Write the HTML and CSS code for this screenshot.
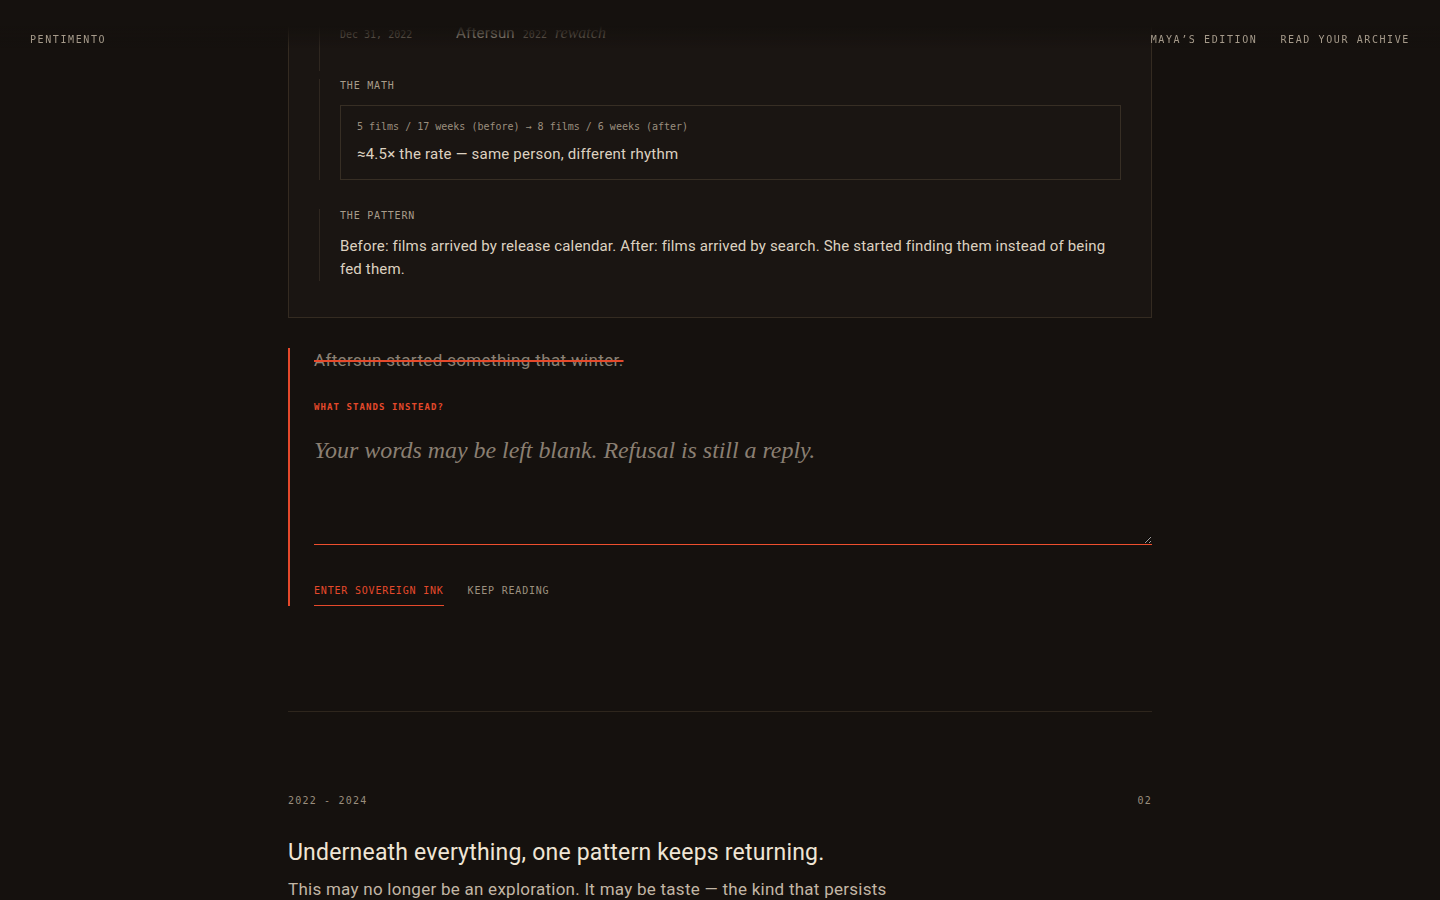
FILE: index.html
```html
<!DOCTYPE html>
<html lang="en">
<head>
<meta charset="utf-8">
<title>Pentimento</title>
<link rel="stylesheet" href="styles.css">
</head>
<body>
<header class="site-header">
  <div class="brand">PENTIMENTO</div>
  <nav class="nav">
    <a class="nav-link" href="#">MAYA’S EDITION</a>
    <a class="nav-link" href="#">READ YOUR ARCHIVE</a>
  </nav>
</header>

<main class="page">
  <section class="card">
    <div class="item item-entry">
      <div class="entry-row">
        <span class="entry-date">Dec 31, 2022</span>
        <span class="entry-film">
          <span class="film-title">Aftersun</span>
          <span class="film-year">2022</span>
          <span class="film-tag">rewatch</span>
        </span>
      </div>
    </div>

    <div class="item item-math">
      <div class="item-label">THE MATH</div>
      <div class="math-box">
        <div class="math-formula">5 films / 17 weeks (before) → 8 films / 6 weeks (after)</div>
        <div class="math-result">≈4.5× the rate — same person, different rhythm</div>
      </div>
    </div>

    <div class="item item-pattern">
      <div class="item-label">THE PATTERN</div>
      <p class="pattern-text">Before: films arrived by release calendar. After: films arrived by search. She started finding them instead of being fed them.</p>
    </div>
  </section>

  <section class="revision">
    <p class="struck">Aftersun started something that winter.</p>
    <div class="prompt-label">WHAT STANDS INSTEAD?</div>
    <div class="reply-wrap">
      <textarea class="reply" placeholder="Your words may be left blank. Refusal is still a reply."></textarea>
    </div>
    <div class="actions">
      <button class="btn btn-primary" type="button">ENTER SOVEREIGN INK</button>
      <button class="btn btn-secondary" type="button">KEEP READING</button>
    </div>
  </section>

  <hr class="divider">

  <section class="chapter">
    <div class="chapter-meta">
      <span>2022 - 2024</span>
      <span>02</span>
    </div>
    <h2 class="chapter-title">Underneath everything, one pattern keeps returning.</h2>
    <p class="chapter-text">This may no longer be an exploration. It may be taste — the kind that persists</p>
  </section>
</main>
</body>
</html>
```

FILE: styles.css
```css
* { box-sizing: border-box; }

html, body {
  margin: 0;
  padding: 0;
  background: #15110e;
  color: #d8ccbb;
  font-family: Roboto, "Liberation Sans", sans-serif;
}

body { height: 900px; overflow: hidden; }

.site-header {
  position: fixed;
  top: 0;
  left: 0;
  right: 0;
  height: 48px;
  display: flex;
  justify-content: space-between;
  align-items: flex-start;
  padding: 33px 30px 0 30px;
  background: linear-gradient(to bottom, #15110e 0px, #15110e 26px, rgba(21,17,14,0.55) 36px, rgba(21,17,14,0) 48px);
  z-index: 10;
  font-family: "DejaVu Sans Mono", "Liberation Mono", monospace;
  font-size: 10px;
  line-height: 14px;
  letter-spacing: 0.16em;
  color: #a59a8a;
}

.nav { display: flex; gap: 23px; }
.nav-link { color: #a59a8a; text-decoration: none; }

.page {
  width: 864px;
  margin: 0 auto;
  padding-top: 8px;
}

.card {
  border: 1px solid #342b21;
  background: #1a1512;
  padding: 11px 30px 36px 30px;
}

.item {
  border-left: 1px solid #2f2720;
  padding-left: 20px;
}

.item-entry { padding-bottom: 23px; }
.item-math { margin-top: 8px; }
.item-pattern { margin-top: 29px; }

.entry-row {
  display: grid;
  grid-template-columns: 116px 1fr;
  align-items: baseline;
  line-height: 26px;
}

.entry-date {
  font-family: "DejaVu Sans Mono", "Liberation Mono", monospace;
  font-size: 10px;
  color: #8a7f70;
}

.entry-film { display: flex; align-items: baseline; gap: 8px; }
.film-title { font-size: 15px; letter-spacing: 0.2px; color: #cfc3b2; }
.film-year {
  font-family: "DejaVu Sans Mono", "Liberation Mono", monospace;
  font-size: 10px;
  color: #8a7f70;
}
.film-tag {
  font-family: "Liberation Serif", "DejaVu Serif", serif;
  font-style: italic;
  font-size: 16px;
  color: #8a7f70;
}

.item-label {
  font-family: "DejaVu Sans Mono", "Liberation Mono", monospace;
  font-size: 10px;
  line-height: 14px;
  letter-spacing: 0.08em;
  color: #a89c8a;
}

.math-box {
  margin-top: 12px;
  border: 1px solid #372e24;
  padding: 14px 16px 14px 16px;
}

.math-formula {
  font-family: "DejaVu Sans Mono", "Liberation Mono", monospace;
  font-size: 10px;
  line-height: 14px;
  color: #9a8e7e;
}

.math-result {
  margin-top: 9px;
  font-size: 15px;
  line-height: 22px;
  letter-spacing: 0.22px;
  color: #ddd1c0;
}

.pattern-text {
  margin: 12px 0 0 0;
  font-size: 15px;
  line-height: 23px;
  letter-spacing: 0.16px;
  color: #ddd1c0;
}

.revision {
  margin-top: 30px;
  border-left: 2px solid #e5492b;
  padding-left: 24px;
}

.struck {
  margin: 0;
  font-size: 17px;
  line-height: 24px;
  letter-spacing: 0.35px;
  color: #8b8175;
  text-decoration: line-through;
  text-decoration-color: #e5492b;
  text-decoration-thickness: 2px;
}

.prompt-label {
  margin-top: 28px;
  font-family: "DejaVu Sans Mono", "Liberation Mono", monospace;
  font-size: 9px;
  font-weight: bold;
  line-height: 14px;
  letter-spacing: 0.12em;
  color: #e5492b;
}

.reply-wrap {
  margin-top: 12px;
  border-bottom: 1px solid #ee4f2e;
}

.reply {
  -webkit-appearance: none;
  appearance: none;
  display: block;
  width: 100%;
  height: 118px;
  margin: 0;
  padding: 9px 0 8px 0;
  background: transparent;
  border: 0;
  border-radius: 0;
  outline: none;
  color: #d8ccbb;
  font-family: "Liberation Serif", "DejaVu Serif", serif;
  font-style: italic;
  font-size: 24px;
  line-height: 31px;
  letter-spacing: -0.05px;
  resize: vertical;
}

.reply::placeholder { color: #8a7f72; opacity: 1; }

.actions {
  margin-top: 39px;
  display: flex;
  gap: 24px;
  align-items: flex-start;
}

.btn {
  background: none;
  border: none;
  padding: 0 0 7px 0;
  margin: 0;
  font-family: "DejaVu Sans Mono", "Liberation Mono", monospace;
  font-size: 10px;
  line-height: 14px;
  letter-spacing: 0.08em;
  cursor: pointer;
}

.btn-primary {
  color: #e5492b;
  border-bottom: 1px solid #e5492b;
}

.btn-secondary {
  color: #9c907f;
  border-bottom: 1px solid transparent;
}

.divider {
  margin: 105px 0 0 0;
  border: none;
  border-top: 1px solid #2e261d;
  height: 0;
}

.chapter { padding-top: 82px; }

.chapter-meta {
  display: flex;
  justify-content: space-between;
  font-family: "DejaVu Sans Mono", "Liberation Mono", monospace;
  font-size: 10px;
  line-height: 14px;
  letter-spacing: 0.12em;
  color: #9a8e7d;
}

.chapter-title {
  margin: 30px 0 0 0;
  font-size: 23px;
  font-weight: 400;
  line-height: 30px;
  letter-spacing: 0.2px;
  color: #efe5d5;
}

.chapter-text {
  margin: 9px 0 0 0;
  font-size: 17px;
  line-height: 24px;
  letter-spacing: 0.26px;
  color: #c2b6a5;
}
```
